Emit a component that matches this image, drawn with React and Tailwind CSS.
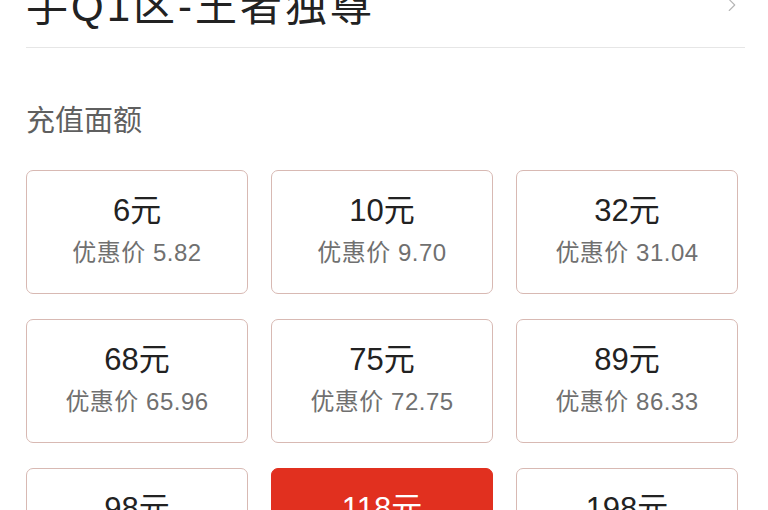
import { ChevronRight } from 'lucide-react';

const amounts = [
  { value: 6, price: '5.82' },
  { value: 10, price: '9.70' },
  { value: 32, price: '31.04' },
  { value: 68, price: '65.96' },
  { value: 75, price: '72.75' },
  { value: 89, price: '86.33' },
  { value: 98, price: '95.06' },
  { value: 118, price: '114.46', selected: true },
  { value: 198, price: '192.06' },
];

function AmountCard({ value, price, selected }) {
  return (
    <div
      className={
        'h-[124px] rounded-[7px] border flex flex-col items-center justify-center gap-[4px] pb-[4px] ' +
        (selected ? 'bg-[#e1301f] border-[#e1301f] text-white' : 'bg-white border-[#d8b9b3]')
      }
    >
      <div className={'text-[31px] leading-[42px] ' + (selected ? 'text-white' : 'text-[#222]')}>{value}元</div>
      <div className={'text-[24px] leading-[34px] tracking-[0.5px] ' + (selected ? 'text-white' : 'text-[#707070]')}>优惠价 {price}</div>
    </div>
  );
}

export default function App() {
  return (
    <div
      className="w-[768px] h-[510px] overflow-hidden bg-white"
      style={{ fontFamily: '"Liberation Sans", "Noto Sans CJK SC", sans-serif' }}
    >
      <div className="-mt-[35px] pl-[26px] pr-[23px]">
        <div className="h-[83px] flex items-center justify-between border-b border-[#e6e6e6]">
          <span className="text-[42px] text-[#222] tracking-[3px]">手Q1区-王者独尊</span>
          <ChevronRight className="w-[22px] h-[22px] text-[#b5b5b5] mr-[2px] -mt-[2px]" strokeWidth={1.2} />
        </div>
      </div>
      <div className="pl-[26px] pr-[30px]">
        <div className="mt-[53px] text-[29px] leading-[40px] text-[#5f5f5f]">充值面额</div>
        <div className="mt-[29px] grid grid-cols-3 gap-x-[23px] gap-y-[25px]">
          {amounts.map((a) => (
            <AmountCard key={a.value} {...a} />
          ))}
        </div>
      </div>
    </div>
  );
}
